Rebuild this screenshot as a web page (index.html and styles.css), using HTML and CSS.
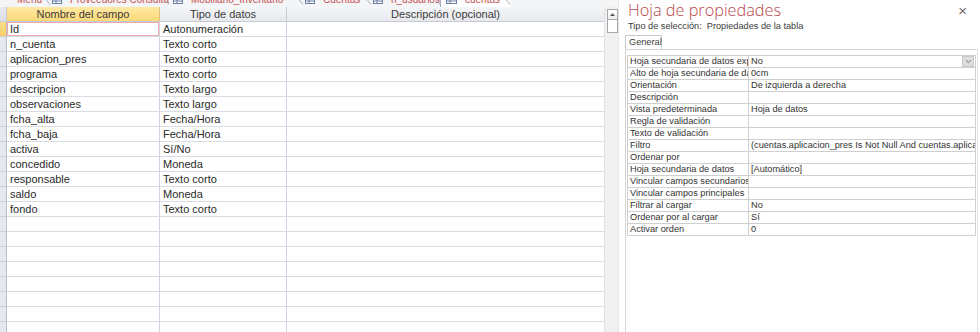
FILE: index.html
```html
<!DOCTYPE html>
<html lang="es">
<head>
<meta charset="utf-8">
<title>cuentas</title>
<link rel="stylesheet" href="styles.css">
</head>
<body>
<div class="app">
  <div class="left">
    <div class="tabstrip">
      <div class="tabs">
        <div class="tab t1"><span class="lbl">Menú</span></div>
        <div class="tab t2"><svg class="ico" width="10" height="9" viewBox="0 0 10 9"><rect x="0.5" y="0.5" width="9" height="8" fill="#fff" stroke="#6a7fa6"/><path d="M0.5 3.5h9M0.5 6h9M4 3.5v5" stroke="#6a7fa6" fill="none"/></svg><span class="lbl">Proveedores Consulta</span></div>
        <div class="tab t3"><svg class="ico" width="10" height="9" viewBox="0 0 10 9"><rect x="0.5" y="0.5" width="9" height="8" fill="#fff" stroke="#6a7fa6"/><path d="M0.5 3.5h9M0.5 6h9M4 3.5v5" stroke="#6a7fa6" fill="none"/></svg><span class="lbl">Mobiliario_Inventario</span></div>
        <div class="tab t4"><svg class="ico" width="10" height="9" viewBox="0 0 10 9"><rect x="0.5" y="0.5" width="9" height="8" fill="#fff" stroke="#6a7fa6"/><path d="M0.5 3.5h9M0.5 6h9M4 3.5v5" stroke="#6a7fa6" fill="none"/></svg><span class="lbl">Cuentas</span></div>
        <div class="tab t5"><svg class="ico" width="10" height="9" viewBox="0 0 10 9"><rect x="0.5" y="0.5" width="9" height="8" fill="#fff" stroke="#6a7fa6"/><path d="M0.5 3.5h9M0.5 6h9M4 3.5v5" stroke="#6a7fa6" fill="none"/></svg><span class="lbl">n_usuarios</span></div>
        <div class="tab t6 active"><svg class="ico" width="11" height="9" viewBox="0 0 11 9"><rect x="0.5" y="0.5" width="10" height="8" fill="#fff" stroke="#6a7fa6"/><path d="M0.5 3.5h10M0.5 6h10M4 3.5v5" stroke="#6a7fa6" fill="none"/></svg><span class="lbl">cuentas</span></div>
      </div>
    </div>
    <div class="main">
      <div class="grid">
        <div class="row head">
          <div class="cell sel corner"></div>
          <div class="cell c1 hl">Nombre del campo</div>
          <div class="cell c2">Tipo de datos</div>
          <div class="cell c3">Descripción (opcional)</div>
        </div>
        <div class="row current">
          <div class="cell sel"></div>
          <div class="cell c1 cur">Id</div>
          <div class="cell c2">Autonumeración</div>
          <div class="cell c3"></div>
        </div>
        <div class="row"><div class="cell sel"></div><div class="cell c1">n_cuenta</div><div class="cell c2">Texto corto</div><div class="cell c3"></div></div>
        <div class="row"><div class="cell sel"></div><div class="cell c1">aplicacion_pres</div><div class="cell c2">Texto corto</div><div class="cell c3"></div></div>
        <div class="row"><div class="cell sel"></div><div class="cell c1">programa</div><div class="cell c2">Texto corto</div><div class="cell c3"></div></div>
        <div class="row"><div class="cell sel"></div><div class="cell c1">descripcion</div><div class="cell c2">Texto largo</div><div class="cell c3"></div></div>
        <div class="row"><div class="cell sel"></div><div class="cell c1">observaciones</div><div class="cell c2">Texto largo</div><div class="cell c3"></div></div>
        <div class="row"><div class="cell sel"></div><div class="cell c1">fcha_alta</div><div class="cell c2">Fecha/Hora</div><div class="cell c3"></div></div>
        <div class="row"><div class="cell sel"></div><div class="cell c1">fcha_baja</div><div class="cell c2">Fecha/Hora</div><div class="cell c3"></div></div>
        <div class="row"><div class="cell sel"></div><div class="cell c1">activa</div><div class="cell c2">Sí/No</div><div class="cell c3"></div></div>
        <div class="row"><div class="cell sel"></div><div class="cell c1">concedido</div><div class="cell c2">Moneda</div><div class="cell c3"></div></div>
        <div class="row"><div class="cell sel"></div><div class="cell c1">responsable</div><div class="cell c2">Texto corto</div><div class="cell c3"></div></div>
        <div class="row"><div class="cell sel"></div><div class="cell c1">saldo</div><div class="cell c2">Moneda</div><div class="cell c3"></div></div>
        <div class="row"><div class="cell sel"></div><div class="cell c1">fondo</div><div class="cell c2">Texto corto</div><div class="cell c3"></div></div>
        <div class="row"><div class="cell sel"></div><div class="cell c1"></div><div class="cell c2"></div><div class="cell c3"></div></div>
        <div class="row"><div class="cell sel"></div><div class="cell c1"></div><div class="cell c2"></div><div class="cell c3"></div></div>
        <div class="row"><div class="cell sel"></div><div class="cell c1"></div><div class="cell c2"></div><div class="cell c3"></div></div>
        <div class="row"><div class="cell sel"></div><div class="cell c1"></div><div class="cell c2"></div><div class="cell c3"></div></div>
        <div class="row"><div class="cell sel"></div><div class="cell c1"></div><div class="cell c2"></div><div class="cell c3"></div></div>
        <div class="row"><div class="cell sel"></div><div class="cell c1"></div><div class="cell c2"></div><div class="cell c3"></div></div>
        <div class="row"><div class="cell sel"></div><div class="cell c1"></div><div class="cell c2"></div><div class="cell c3"></div></div>
        <div class="row"><div class="cell sel"></div><div class="cell c1"></div><div class="cell c2"></div><div class="cell c3"></div></div>
      </div>
      <div class="vscroll">
        <div class="sbtn"><svg width="9" height="9" viewBox="0 0 9 9"><path d="M2 6L4.5 3.2L7 6Z" fill="#555"/></svg></div>
        <div class="thumb"></div>
        <div class="track"></div>
      </div>
    </div>
  </div>

  <div class="props">
    <div class="ptitle">
      <span class="ttl">Hoja de propiedades</span>
      <span class="close">×</span>
    </div>
    <div class="psub">Tipo de selección:&nbsp; Propiedades de la tabla</div>
    <div class="ptabs"><span class="ptab">General</span></div>
    <div class="ppage">
      <table class="ptable">
        <colgroup><col class="k"><col class="v"></colgroup>
        <tr><td><div class="clip">Hoja secundaria de datos expandida</div></td><td class="dd">No<span class="ddbtn"><svg width="7" height="5" viewBox="0 0 7 5"><path d="M1 1.2L3.5 3.6L6 1.2" stroke="#777" fill="none"/></svg></span></td></tr>
        <tr><td><div class="clip">Alto de hoja secundaria de datos</div></td><td>0cm</td></tr>
        <tr><td>Orientación</td><td>De izquierda a derecha</td></tr>
        <tr><td>Descripción</td><td></td></tr>
        <tr><td>Vista predeterminada</td><td>Hoja de datos</td></tr>
        <tr><td>Regla de validación</td><td></td></tr>
        <tr><td>Texto de validación</td><td></td></tr>
        <tr><td>Filtro</td><td><div class="clip">(cuentas.aplicacion_pres Is Not Null And cuentas.aplicacion_pres&lt;&gt;"")</div></td></tr>
        <tr><td>Ordenar por</td><td></td></tr>
        <tr><td>Hoja secundaria de datos</td><td>[Automático]</td></tr>
        <tr><td>Vincular campos secundarios</td><td></td></tr>
        <tr><td>Vincular campos principales</td><td></td></tr>
        <tr><td>Filtrar al cargar</td><td>No</td></tr>
        <tr><td>Ordenar por al cargar</td><td>Sí</td></tr>
        <tr><td>Activar orden</td><td>0</td></tr>
      </table>
    </div>
  </div>
</div>
</body>
</html>
```

FILE: styles.css
```css
html, body {
  margin: 0;
  padding: 0;
}
body {
  width: 980px;
  height: 332px;
  overflow: hidden;
  background: #ffffff;
  font-family: "Liberation Sans", Arial, sans-serif;
  color: #262626;
}
.app {
  display: flex;
  height: 332px;
}

/* ---------- left: table design view ---------- */
.left {
  width: 618px;
  display: flex;
  flex-direction: column;
}
.tabstrip {
  height: 7px;
  overflow: hidden;
  background: #f4f5f7;
}
.tabs {
  display: flex;
  height: 16px;
  margin-top: -9px;
}
.tab {
  position: relative;
  box-sizing: border-box;
  display: flex;
  align-items: center;
  height: 16px;
  font-size: 10px;
  color: #c4504f;
  white-space: nowrap;
  overflow: hidden;
}
.tab::after {
  content: "";
  position: absolute;
  right: 4px;
  top: 0;
  bottom: 0;
  border-right: 1px solid #a9aeba;
  transform: skewX(40deg);
}
.tab .ico {
  flex: none;
  margin-right: 8px;
}
.t1 { width: 50px; padding-left: 17px; }
.t2 { width: 119px; padding-left: 2px; }
.t3 { width: 134px; padding-left: 4px; }
.t4 { width: 68px; padding-left: 2px; }
.t5 { width: 69px; padding-left: 2px; }
.t6 { width: 70px; padding-left: 5px; }
.tab.active {
  background: #ffffff;
  border-left: 1px solid #a9aeba;
}

.main {
  display: flex;
  flex: 1;
  overflow: hidden;
}
.grid {
  width: 604px;
  flex: none;
}
.row {
  display: flex;
  height: 15px;
}
.cell {
  box-sizing: border-box;
  height: 15px;
  border-right: 1px solid #cfd4e2;
  border-bottom: 1px solid #d9dce4;
  font-size: 11px;
  line-height: 14px;
  padding-left: 3px;
  white-space: nowrap;
  overflow: hidden;
  color: #2a2a2a;
}
.sel {
  width: 7px;
  padding: 0;
  background: #e5e8ee;
  border-right: 1px solid #b8bdca;
  border-bottom: 1px solid #c8ccd6;
}
.c1 { width: 153px; }
.c2 { width: 127px; }
.c3 { width: 317px; border-right: none; }

.head .cell {
  background: linear-gradient(#f5f6f8, #e7e9ed);
  text-align: center;
  padding-left: 0;
  color: #3a3a3a;
  border-bottom: 1px solid #c4c9d5;
  border-right-color: #c4c9d5;
}
.head .corner {
  background: linear-gradient(#e9ebef, #dcdfe5);
}
.head .c1.hl {
  background: linear-gradient(#fee9a3, #fcd978);
  border-right-color: #d9c27f;
}
.row.current .sel {
  background: linear-gradient(#fcdf8c, #f8cf69);
}
.cur {
  box-shadow: inset 0 0 0 1px #f1a9aa;
}

.vscroll {
  width: 14px;
  flex: none;
  display: flex;
  flex-direction: column;
  align-items: center;
  padding-top: 2px;
  background: #f0f0f0;
  border-left: 1px solid #e2e2e2;
}
.sbtn {
  box-sizing: border-box;
  width: 11px;
  height: 11px;
  border: 1px solid #a8a8a8;
  background: linear-gradient(#fdfdfd, #ececec);
  display: flex;
  align-items: center;
  justify-content: center;
}
.thumb {
  box-sizing: border-box;
  width: 11px;
  height: 14px;
  margin-top: -1px;
  border: 1px solid #a8a8a8;
  background: #ffffff;
}
.track {
  flex: 1;
}

/* ---------- right: property sheet ---------- */
.props {
  width: 362px;
  flex: none;
  box-sizing: border-box;
  border-left: 1px solid #e6e6e6;
  padding-left: 6px;
  padding-right: 2px;
  display: flex;
  flex-direction: column;
  background: #ffffff;
}
.ptitle {
  display: flex;
  justify-content: space-between;
  align-items: flex-start;
  height: 21px;
  padding-left: 3px;
}
.ttl {
  font-family: "Open Sans", "Liberation Sans", sans-serif;
  font-weight: 300;
  font-size: 16.3px;
  line-height: 20px;
  color: #b9474c;
}
.close {
  font-size: 15px;
  line-height: 16px;
  color: #6a6a6a;
  margin-right: 11px;
  margin-top: 3px;
}
.psub {
  font-size: 9.2px;
  line-height: 11px;
  height: 11px;
  color: #3c3c3c;
  padding-left: 3px;
}
.ptabs {
  display: flex;
  margin-top: 3px;
}
.ptab {
  box-sizing: border-box;
  height: 14px;
  width: 37px;
  border: 1px solid #c9c9c9;
  border-bottom: none;
  font-size: 9.2px;
  line-height: 13px;
  padding-left: 3px;
  color: #3c3c3c;
  background: #ffffff;
}
.ppage {
  flex: 1;
  border-top: 1px solid #d6d6d6;
  border-left: 1px solid #d6d6d6;
  border-right: 1px solid #e2e2e2;
  padding: 5px 0 0 1px;
}
.ptable {
  border-collapse: collapse;
  table-layout: fixed;
  width: 348px;
  border: 1px solid #c4c4c4;
}
.ptable col.k { width: 121px; }
.ptable col.v { width: 227px; }
.ptable td {
  height: 11px;
  padding: 0 0 0 2px;
  border: 1px solid #cfcfcf;
  font-size: 9.2px;
  line-height: 11px;
  color: #333333;
  white-space: nowrap;
  overflow: hidden;
}
.clip {
  overflow: hidden;
  white-space: nowrap;
}
.ptable td.dd {
  position: relative;
}
.ddbtn {
  position: absolute;
  right: 1px;
  top: 0;
  box-sizing: border-box;
  width: 12px;
  height: 11px;
  background: #dedede;
  border: 1px solid #c8c8c8;
  display: flex;
  align-items: center;
  justify-content: center;
}
```
